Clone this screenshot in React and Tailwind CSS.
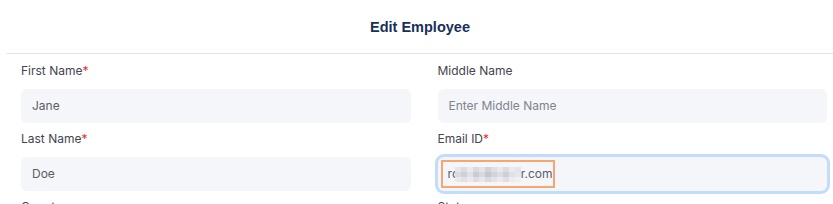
import React from 'react';

const Field = ({ label, required, children }) => (
    <div className="flex flex-col">
        <label className="text-[12px] leading-4 text-[#44444f] mb-[10px]">
            {label}
            {required && <span className="text-[#ef2b2b]">*</span>}
        </label>
        {children}
    </div>
);

const TextInput = ({ value, placeholder }) => (
    <div className="h-[34px] rounded-md bg-[#f5f6fa] px-[11px] flex items-center text-[12px]">
        {value ? (
            <span className="text-[#5c5c68]">{value}</span>
        ) : (
            <span className="text-[#80848f]">{placeholder}</span>
        )}
    </div>
);

// pixelated blur over the email address
const mosaic = [
    ['#e6e6eb', '#dcdce3', '#e8e8ed', '#d9d9e0', '#e3e3e9', '#d2d2da', '#dedee4', '#e7e7ec', '#dbdbe2', '#ebebef', '#e4e4e9'],
    ['#dadae1', '#d0d0d8', '#e0e0e6', '#cbcbd4', '#d8d8df', '#c6c6cf', '#d3d3db', '#dcdce2', '#cfcfd7', '#e0e0e6', '#e8e8ec'],
    ['#e8e8ec', '#e0e0e6', '#e9e9ee', '#dddde3', '#e6e6eb', '#d9d9e0', '#e2e2e8', '#eaeaee', '#dfdfe5', '#ededf1', '#f0f0f3'],
];

const Blurred = () => (
    <span className="flex flex-col h-[15px]">
        {mosaic.map((row, r) => (
            <span key={r} className="flex h-[5px]">
                {row.map((c, i) => (
                    <span key={i} className="w-[6px] h-full" style={{ background: c }} />
                ))}
            </span>
        ))}
    </span>
);

export default function App() {
    return (
        <div className="w-[833px] h-[204px] overflow-hidden bg-white pl-[7px] font-['Inter',sans-serif]">
            <div className="h-[54px] border-b border-[#e2e3e7] flex items-center justify-center pt-[2px]">
                <h2 className="text-[14.5px] font-bold text-[#17305a] font-['Liberation_Sans',Arial,sans-serif]">Edit Employee</h2>
            </div>

            <div className="pt-[9px] pl-[14px] pr-[6px] grid grid-cols-2 gap-x-[27px] gap-y-[8px]">
                <Field label="First Name" required>
                    <TextInput value="Jane" />
                </Field>
                <Field label="Middle Name">
                    <TextInput placeholder="Enter Middle Name" />
                </Field>
                <Field label="Last Name" required>
                    <TextInput value="Doe" />
                </Field>
                <Field label="Email ID" required>
                    <div className="h-[34px] rounded-md bg-[#f5f6fa] ring-[3px] ring-[#c2ddfc] flex items-center pl-[3px]">
                        <span className="h-[28px] w-[114px] border-2 border-[#f6a66e] flex items-center pl-[5px] text-[12px] text-[#5c5c68]">
                            <span>r</span>
                            <span className="w-[4px] overflow-hidden">c</span>
                            <Blurred />
                            <span>r.com</span>
                        </span>
                    </div>
                </Field>
                <Field label="Country">
                    <TextInput placeholder="Select Country" />
                </Field>
                <Field label="State">
                    <TextInput placeholder="Select State" />
                </Field>
            </div>
        </div>
    );
}
